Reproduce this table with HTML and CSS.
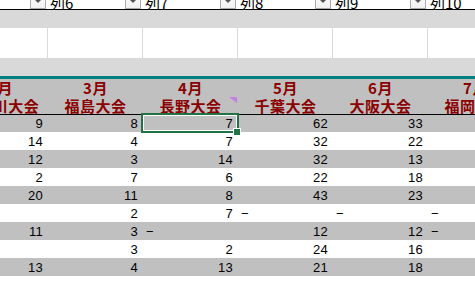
FILE: index.html
```html
<!DOCTYPE html>
<html lang="ja">
<head>
<meta charset="utf-8">
<title>Sheet</title>
<link rel="stylesheet" href="styles.css">
</head>
<body>
<div class="sheet">
  <div class="row filter">
    <div class="cell"><span class="lbl">列5</span><span class="dd"><i class="arrow"></i></span></div>
    <div class="cell"><span class="lbl">列6</span><span class="dd"><i class="arrow"></i></span></div>
    <div class="cell"><span class="lbl">列7</span><span class="dd"><i class="arrow"></i></span></div>
    <div class="cell"><span class="lbl">列8</span><span class="dd"><i class="arrow"></i></span></div>
    <div class="cell"><span class="lbl">列9</span><span class="dd"><i class="arrow"></i></span></div>
    <div class="cell"><span class="lbl">列10</span><span class="dd"><i class="arrow"></i></span></div>
  </div>
  <div class="row band"></div>
  <div class="row blank">
    <div class="cell"></div><div class="cell"></div><div class="cell"></div>
    <div class="cell"></div><div class="cell"></div><div class="cell"></div>
  </div>
  <div class="row band"></div>
  <div class="teal"></div>
  <div class="row head month">
    <div class="cell">2月</div><div class="cell">3月</div><div class="cell">4月</div>
    <div class="cell">5月</div><div class="cell">6月</div><div class="cell">7月</div>
  </div>
  <div class="row head venue">
    <div class="cell">神奈川大会</div><div class="cell">福島大会</div>
    <div class="cell commented">長野大会<i class="note"></i></div>
    <div class="cell">千葉大会</div><div class="cell">大阪大会</div><div class="cell">福岡大会</div>
  </div>

  <div class="row data gray first">
    <div class="cell">9</div><div class="cell">8</div>
    <div class="cell selected">7<i class="sel"></i><i class="handle"></i></div>
    <div class="cell">62</div><div class="cell">33</div><div class="cell"></div>
  </div>
  <div class="row data">
    <div class="cell">14</div><div class="cell">4</div><div class="cell">7</div>
    <div class="cell">32</div><div class="cell">22</div><div class="cell"></div>
  </div>
  <div class="row data gray">
    <div class="cell">12</div><div class="cell">3</div><div class="cell">14</div>
    <div class="cell">32</div><div class="cell">13</div><div class="cell"></div>
  </div>
  <div class="row data">
    <div class="cell">2</div><div class="cell">7</div><div class="cell">6</div>
    <div class="cell">22</div><div class="cell">18</div><div class="cell"></div>
  </div>
  <div class="row data gray">
    <div class="cell">20</div><div class="cell">11</div><div class="cell">8</div>
    <div class="cell">43</div><div class="cell">23</div><div class="cell"></div>
  </div>
  <div class="row data">
    <div class="cell"></div><div class="cell">2</div><div class="cell">7</div>
    <div class="cell dash">−</div><div class="cell dash">−</div><div class="cell dash">−</div>
  </div>
  <div class="row data gray">
    <div class="cell">11</div><div class="cell">3</div><div class="cell dash">−</div>
    <div class="cell">12</div><div class="cell">12</div><div class="cell dash">−</div>
  </div>
  <div class="row data">
    <div class="cell"></div><div class="cell">3</div><div class="cell">2</div>
    <div class="cell">24</div><div class="cell">16</div><div class="cell"></div>
  </div>
  <div class="row data gray">
    <div class="cell">13</div><div class="cell">4</div><div class="cell">13</div>
    <div class="cell">21</div><div class="cell">18</div><div class="cell"></div>
  </div>
  <div class="row data">
    <div class="cell"></div><div class="cell"></div><div class="cell"></div>
    <div class="cell"></div><div class="cell"></div><div class="cell"></div>
  </div>
</div>
</body>
</html>
```
FILE: styles.css
```css
html, body {
  margin: 0;
  padding: 0;
  overflow: hidden;
  background: #ffffff;
}

.sheet {
  margin-left: -47px;
  width: 570px;
  font-family: "Noto Sans CJK JP", "Noto Sans", sans-serif;
}

.row {
  display: flex;
}

.cell {
  width: 95px;
  flex: 0 0 95px;
  box-sizing: border-box;
  position: relative;
}

/* filter header row (scrolled, only its bottom visible) */
.filter {
  height: 10px;
  border-bottom: 1px solid #000;
  box-sizing: border-box;
  overflow: hidden;
  align-items: flex-end;
}
.filter .cell {
  height: 9px;
  display: flex;
  align-items: flex-end;
  justify-content: space-between;
  padding: 0 2px 0 2px;
}
.lbl {
  font-size: 15px;
  line-height: 15px;
  color: #000;
  margin-bottom: -1px;
}
.dd {
  width: 16px;
  height: 17px;
  box-sizing: border-box;
  border: 1px solid #ababab;
  background: linear-gradient(#ffffff, #f1f1f1);
  display: flex;
  align-items: center;
  justify-content: center;
  flex: 0 0 16px;
}
.arrow {
  width: 0;
  height: 0;
  border-left: 3px solid transparent;
  border-right: 3px solid transparent;
  border-top: 3px solid #555;
  margin-top: 1px;
}

.band {
  height: 18px;
  background: #d9d9d9;
}

.blank {
  height: 30px;
}
.blank .cell {
  border-right: 1px solid #dadada;
}

.teal {
  height: 3px;
  background: #008080;
}

.head {
  background: #c0c0c0;
}
.head .cell {
  text-align: center;
  color: #8b0000;
  font-weight: bold;
  font-size: 15px;
  letter-spacing: 0.5px;
  white-space: nowrap;
}
.month {
  height: 18px;
}
.month .cell {
  line-height: 18px;
}
.venue {
  height: 18px;
  border-bottom: 1px solid #000;
  box-sizing: border-box;
}
.venue .cell {
  line-height: 17px;
}
.note {
  position: absolute;
  top: 0;
  right: 1px;
  width: 0;
  height: 0;
  border-top: 6px solid #c47fe0;
  border-left: 8px solid transparent;
}

.data {
  height: 18px;
  font-family: "Liberation Sans", Arial, sans-serif;
  font-size: 13px;
  letter-spacing: 0.3px;
  color: #000;
}
.data.first {
  height: 17px;
}
.data .cell {
  text-align: right;
  padding-right: 5px;
  line-height: 19px;
}
.data.first .cell {
  line-height: 18px;
}
.data .cell.dash {
  text-align: left;
  padding-left: 3px;
  padding-right: 0;
  font-size: 13px;
  letter-spacing: 0;
}
.gray {
  background: #c0c0c0;
}

.sel {
  position: absolute;
  left: -2px;
  right: -1px;
  top: -2px;
  bottom: -1px;
  border: 2px solid #217346;
  box-shadow: inset 0 0 0 1px #ffffff;
}
.handle {
  position: absolute;
  right: -2px;
  bottom: -3px;
  width: 6px;
  height: 6px;
  background: #217346;
  box-shadow: 0 0 0 1px #ffffff;
}
```
